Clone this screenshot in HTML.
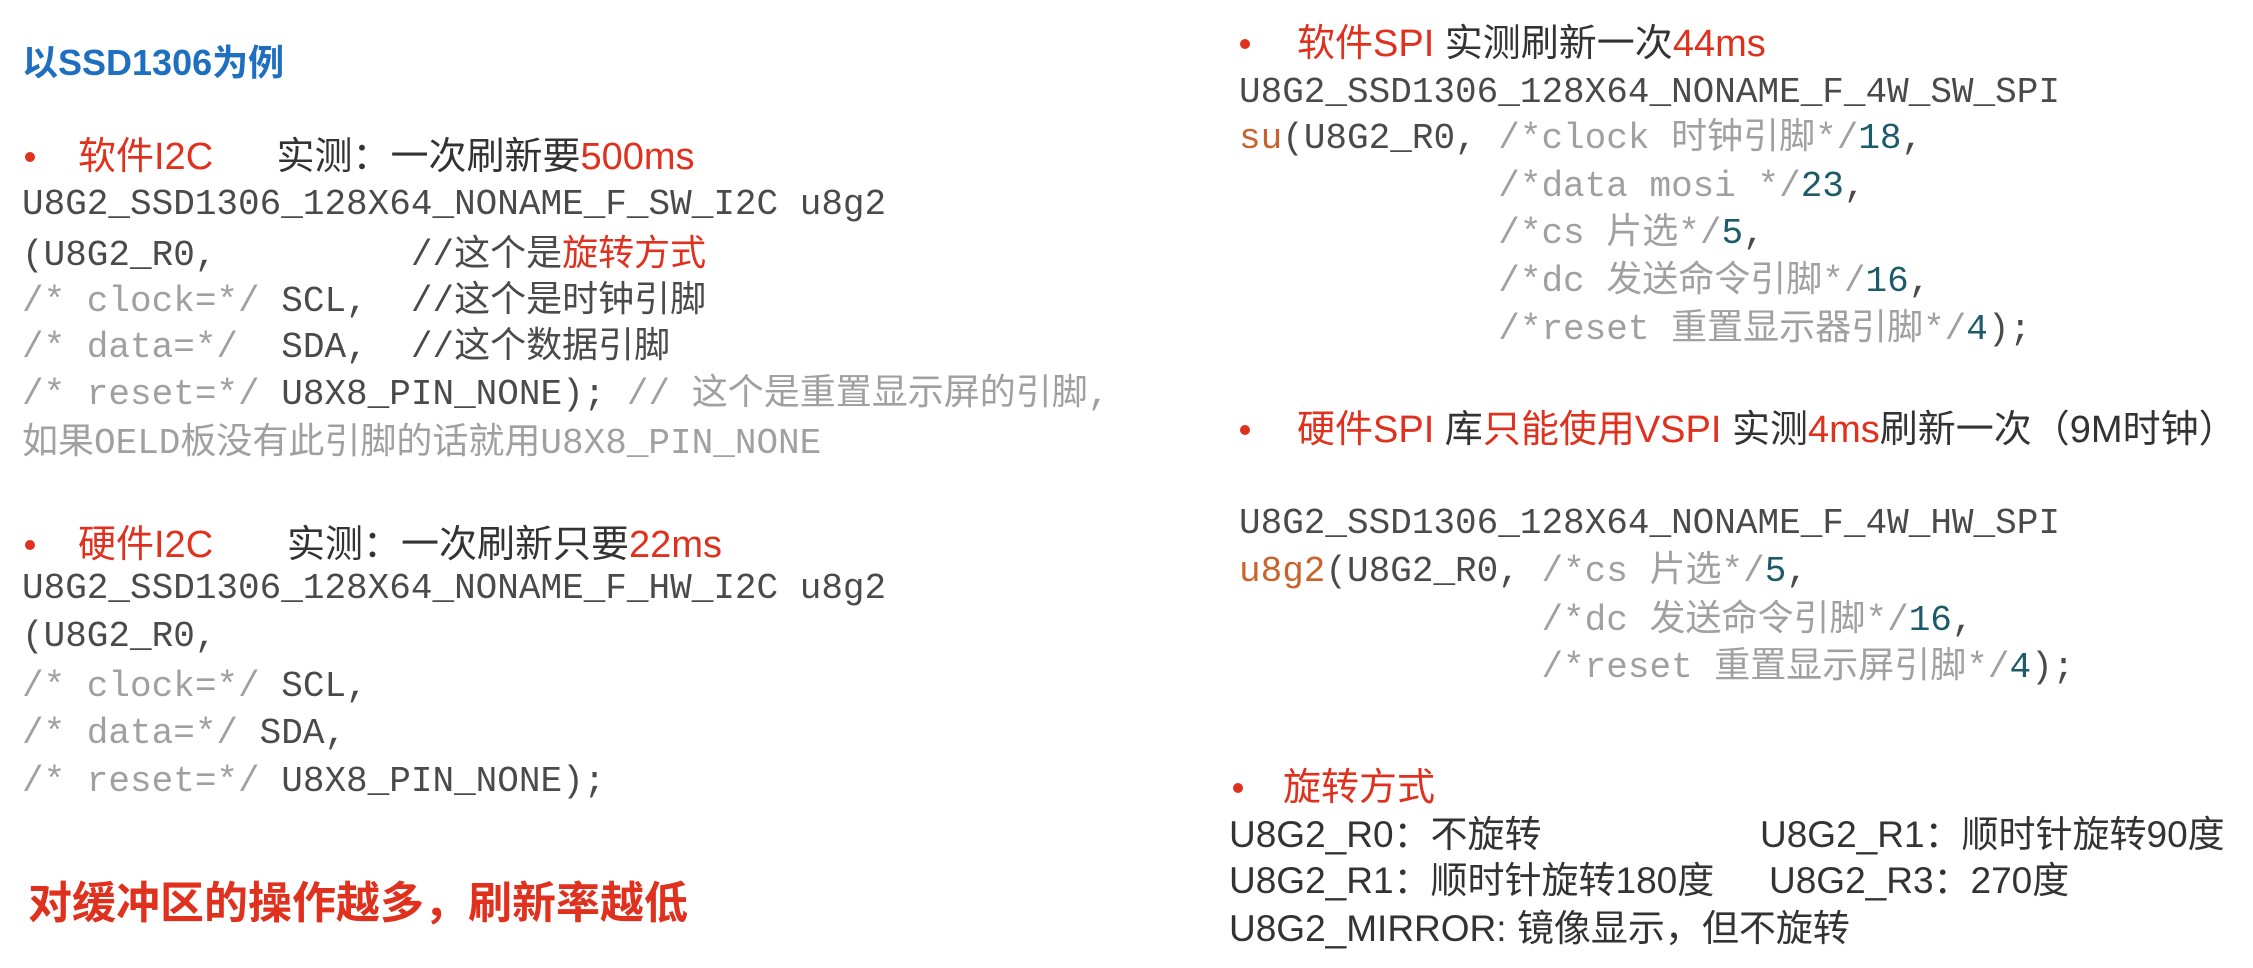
<!DOCTYPE html>
<html><head><meta charset="utf-8"><style>
html,body{margin:0;padding:0;background:#fff;width:2253px;height:968px;overflow:hidden;position:relative}
.t{position:absolute;white-space:pre;line-height:48px;height:48px}
.s{font-family:"Liberation Sans","Noto Sans CJK SC",sans-serif;font-size:38px;color:#333}
.q{font-size:37px}
.m{font-family:"Liberation Mono","Noto Sans CJK SC",monospace;font-size:36px;color:#4a4a4a}
.r{color:#e0301e}.g{color:#a0a0a0}.n{color:#1d5a6a}.o{color:#c8632c}
.b{position:absolute;width:10px;height:10px;border-radius:50%;background:#e0301e}
</style></head><body>
<div class="t s" style="left:22px;top:39px;color:#1f6fc0;font-weight:bold;font-size:36px">以SSD1306为例</div>

<div class="b" style="left:25px;top:152px"></div>
<div class="t s" style="left:78px;top:133px"><span class="r">软件I2C</span>      实测：一次刷新要<span class="r">500ms</span></div>
<div class="t m" style="left:22px;top:181px">U8G2_SSD1306_128X64_NONAME_F_SW_I2C u8g2</div>
<div class="t m" style="left:22px;top:232px">(U8G2_R0,         //这个是<span class="r">旋转方式</span></div>
<div class="t m" style="left:22px;top:278px"><span class="g">/* clock=*/</span> SCL,  //这个是时钟引脚</div>
<div class="t m" style="left:22px;top:324px"><span class="g">/* data=*/</span>  SDA,  //这个数据引脚</div>
<div class="t m" style="left:22px;top:371px"><span class="g">/* reset=*/</span> U8X8_PIN_NONE); <span class="g">// 这个是重置显示屏的引脚,</span></div>
<div class="t m g" style="left:22px;top:420px">如果OELD板没有此引脚的话就用U8X8_PIN_NONE</div>

<div class="b" style="left:25px;top:540px"></div>
<div class="t s" style="left:78px;top:521px"><span class="r">硬件I2C</span>       实测：一次刷新只要<span class="r">22ms</span></div>
<div class="t m" style="left:22px;top:565px">U8G2_SSD1306_128X64_NONAME_F_HW_I2C u8g2</div>
<div class="t m" style="left:22px;top:613px">(U8G2_R0,</div>
<div class="t m" style="left:22px;top:663px"><span class="g">/* clock=*/</span> SCL,</div>
<div class="t m" style="left:22px;top:710px"><span class="g">/* data=*/</span> SDA,</div>
<div class="t m" style="left:22px;top:758px"><span class="g">/* reset=*/</span> U8X8_PIN_NONE);</div>

<div class="t s r" style="left:28px;top:880px;font-weight:bold;font-size:44px">对缓冲区的操作越多，刷新率越低</div>

<div class="b" style="left:1240px;top:39px"></div>
<div class="t s" style="left:1297px;top:20px"><span class="r">软件SPI</span> 实测刷新一次<span class="r">44ms</span></div>
<div class="t m" style="left:1239px;top:69px">U8G2_SSD1306_128X64_NONAME_F_4W_SW_SPI</div>
<div class="t m" style="left:1239px;top:115px"><span class="o">su</span>(U8G2_R0, <span class="g">/*clock 时钟引脚*/</span><span class="n">18</span>,</div>
<div class="t m" style="left:1239px;top:163px">            <span class="g">/*data mosi */</span><span class="n">23</span>,</div>
<div class="t m" style="left:1239px;top:210px">            <span class="g">/*cs 片选*/</span><span class="n">5</span>,</div>
<div class="t m" style="left:1239px;top:258px">            <span class="g">/*dc 发送命令引脚*/</span><span class="n">16</span>,</div>
<div class="t m" style="left:1239px;top:306px">            <span class="g">/*reset 重置显示器引脚*/</span><span class="n">4</span>);</div>

<div class="b" style="left:1240px;top:425px"></div>
<div class="t s" style="left:1297px;top:406px"><span class="r">硬件SPI</span> 库<span class="r">只能使用VSPI</span> 实测<span class="r">4ms</span>刷新一次（9M时钟）</div>
<div class="t m" style="left:1239px;top:500px">U8G2_SSD1306_128X64_NONAME_F_4W_HW_SPI</div>
<div class="t m" style="left:1239px;top:548px"><span class="o">u8g2</span>(U8G2_R0, <span class="g">/*cs 片选*/</span><span class="n">5</span>,</div>
<div class="t m" style="left:1239px;top:597px">              <span class="g">/*dc 发送命令引脚*/</span><span class="n">16</span>,</div>
<div class="t m" style="left:1239px;top:644px">              <span class="g">/*reset 重置显示屏引脚*/</span><span class="n">4</span>);</div>

<div class="b" style="left:1233px;top:783px"></div>
<div class="t s r" style="left:1283px;top:764px">旋转方式</div>
<div class="t s q" style="left:1229px;top:811px">U8G2_R0：不旋转</div>
<div class="t s q" style="left:1760px;top:811px">U8G2_R1：顺时针旋转90度</div>
<div class="t s q" style="left:1229px;top:857px">U8G2_R1：顺时针旋转180度</div>
<div class="t s q" style="left:1769px;top:857px">U8G2_R3：270度</div>
<div class="t s q" style="left:1229px;top:905px">U8G2_MIRROR: 镜像显示，但不旋转</div>
</body></html>
